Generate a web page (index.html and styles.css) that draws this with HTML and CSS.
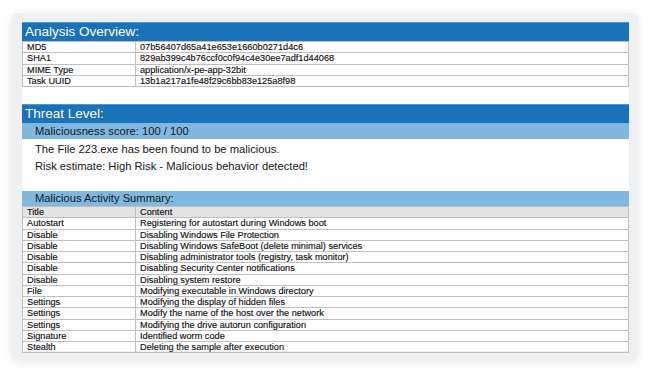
FILE: index.html
```html
<!DOCTYPE html>
<html>
<head>
<meta charset="utf-8">
<link rel="stylesheet" href="styles.css">
</head>
<body>
<div class="card">
  <div class="panel">
    <h2 class="bar-title">Analysis Overview:</h2>
    <table class="grid">
      <colgroup><col class="c1"><col></colgroup>
      <tr><td>MD5</td><td>07b56407d65a41e653e1660b0271d4c6</td></tr>
      <tr><td>SHA1</td><td>829ab399c4b76ccf0c0f94c4e30ee7adf1d44068</td></tr>
      <tr><td>MIME Type</td><td>application/x-pe-app-32bit</td></tr>
      <tr><td>Task UUID</td><td>13b1a217a1fe48f29c6bb83e125a8f98</td></tr>
    </table>

    <h2 class="bar-title threat">Threat Level:</h2>
    <div class="sub-bar">Maliciousness score: 100 / 100</div>
    <p class="note first">The File 223.exe has been found to be malicious.</p>
    <p class="note">Risk estimate: High Risk - Malicious behavior detected!</p>

    <div class="sub-bar summary">Malicious Activity Summary:</div>
    <table class="grid">
      <colgroup><col class="c1"><col></colgroup>
      <tr class="head"><td>Title</td><td>Content</td></tr>
      <tr><td>Autostart</td><td>Registering for autostart during Windows boot</td></tr>
      <tr><td>Disable</td><td>Disabling Windows File Protection</td></tr>
      <tr><td>Disable</td><td>Disabling Windows SafeBoot (delete minimal) services</td></tr>
      <tr><td>Disable</td><td>Disabling administrator tools (registry, task monitor)</td></tr>
      <tr><td>Disable</td><td>Disabling Security Center notifications</td></tr>
      <tr><td>Disable</td><td>Disabling system restore</td></tr>
      <tr><td>File</td><td>Modifying executable in Windows directory</td></tr>
      <tr><td>Settings</td><td>Modifying the display of hidden files</td></tr>
      <tr><td>Settings</td><td>Modify the name of the host over the network</td></tr>
      <tr><td>Settings</td><td>Modifying the drive autorun configuration</td></tr>
      <tr><td>Signature</td><td>Identified worm code</td></tr>
      <tr><td>Stealth</td><td>Deleting the sample after execution</td></tr>
    </table>
  </div>
</div>
</body>
</html>
```
FILE: styles.css
```css
html, body {
  margin: 0;
  padding: 0;
  background: #ffffff;
}
body {
  font-family: "Liberation Sans", Arial, sans-serif;
  color: #161616;
}
.card {
  margin: 13px 12px 12px 12px;
  padding: 9px 9px 9px 10px;
  background: #eff0f1;
  border-radius: 6px;
  box-shadow: 0 2px 8px rgba(0, 0, 0, 0.10);
}
.panel {
  background: #ffffff;
  height: 329px;
  box-sizing: border-box;
}
.bar-title {
  margin: 0;
  height: 19px;
  box-sizing: border-box;
  padding-left: 3px;
  background: #1a72b8;
  border-top: 1px solid #4f95cf;
  color: #ffffff;
  font-size: 13.5px;
  font-weight: normal;
  line-height: 18px;
}
.bar-title.threat {
  margin-top: 17px;
}
.grid {
  width: 100%;
  border-collapse: collapse;
  table-layout: fixed;
  font-size: 9.2px;
  color: #111111;
  -webkit-text-stroke: 0.15px #111111;
}
.grid .c1 {
  width: 113px;
}
.grid td {
  border: 1px solid #bfbfbf;
  padding: 0 0 0 4px;
  line-height: 10.25px;
  height: 10.25px;
  white-space: nowrap;
  overflow: hidden;
}
.grid tr.head td {
  background: #e3e3e3;
}
.sub-bar {
  height: 16px;
  padding-left: 13px;
  background: #80b8e0;
  font-size: 11.2px;
  line-height: 16px;
}
.sub-bar.summary {
  margin-top: 16px;
  height: 15px;
  line-height: 15px;
}
.note {
  margin: 0;
  padding-left: 13px;
  font-size: 11.2px;
  line-height: 17px;
}
.note.first {
  margin-top: 2px;
}
```
